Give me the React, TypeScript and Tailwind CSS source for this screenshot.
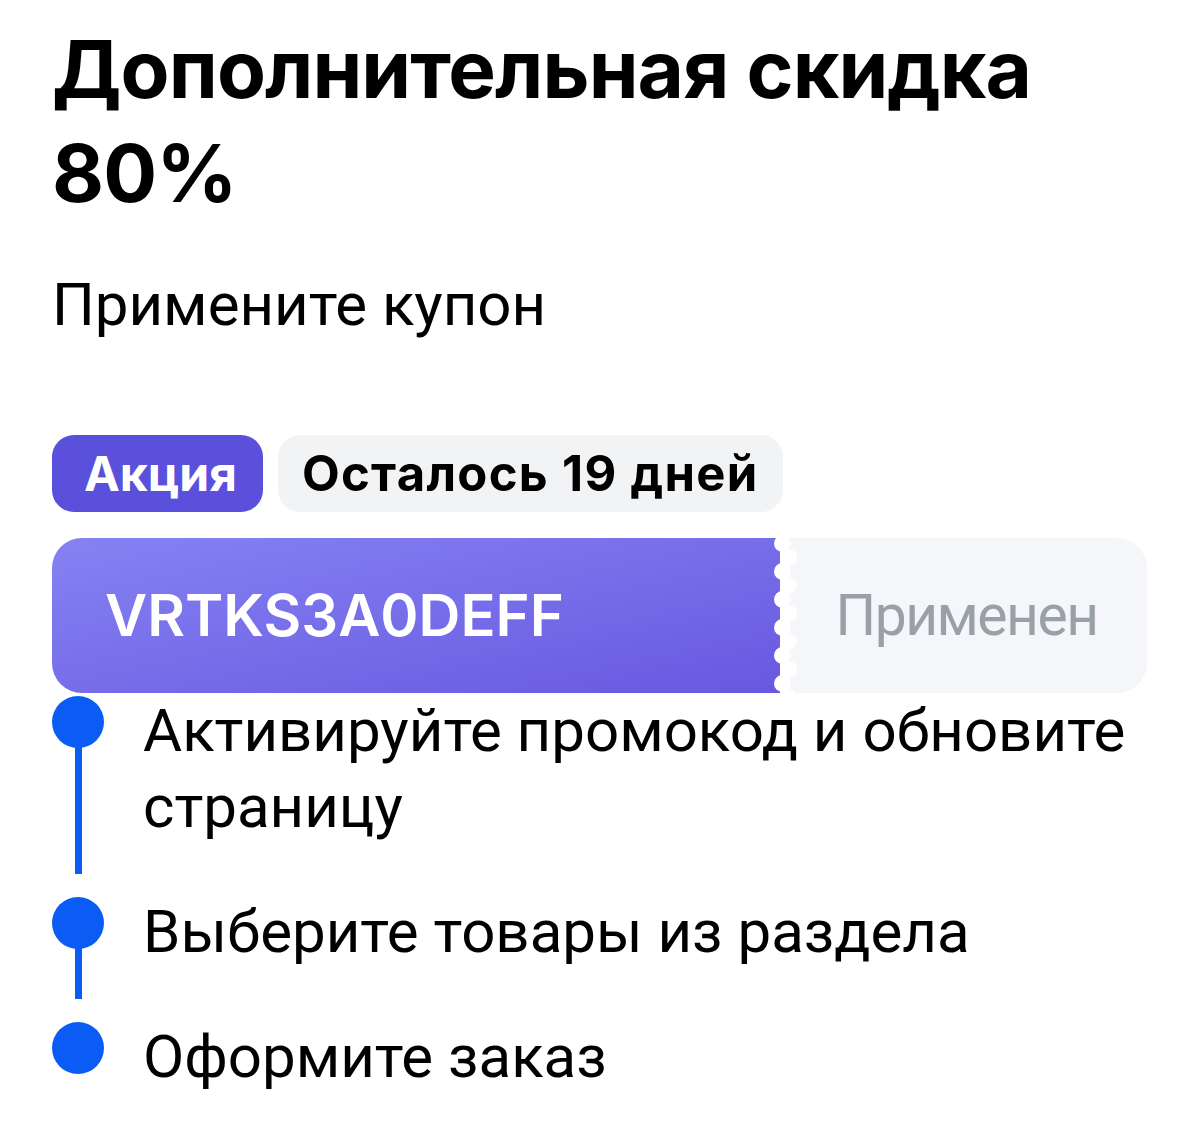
import React from "react";

const steps = [
  "Активируйте промокод и обновите страницу",
  "Выберите товары из раздела",
  "Оформите заказ",
];

function Scallops() {
  const a = [0, 1, 2, 3, 4, 5];
  return (
    <div className="pointer-events-none absolute top-0 bottom-0 left-[722px] w-[20px]">
      {a.map((i) => (
        <div
          key={"a" + i}
          className="absolute h-[17px] w-[17px] rounded-full bg-white"
          style={{ left: 0, top: i * 28 - 3 }}
        />
      ))}
      {a.map((i) => (
        <div
          key={"b" + i}
          className="absolute h-[17px] w-[17px] rounded-full bg-white"
          style={{ left: 6, top: i * 28 + 11 }}
        />
      ))}
    </div>
  );
}

export default function App() {
  return (
    <div className="min-h-[1144px] w-[1199px] bg-white px-[52px] pt-[17px] text-black">
      <h1 className="font-['Inter',sans-serif] text-[80px] font-bold leading-[104px] tracking-[-0.9px]">
        Дополнительная скидка
        <br />
        80%
      </h1>
      <p className="mt-[45px] font-['Roboto',sans-serif] text-[60px] leading-[70px]">
        Примените купон
      </p>

      <div className="mt-[95px] flex gap-[15px]">
        <div className="flex h-[77px] items-center rounded-[22px] bg-[#5a50dc] pl-[32px] pr-[26px] font-['Inter',sans-serif] text-[48px] font-bold tracking-[0px] text-white">
          Акция
        </div>
        <div className="flex h-[77px] items-center rounded-[22px] bg-[#f2f3f5] px-[24px] font-['Inter',sans-serif] text-[49px] font-bold tracking-[1.3px]">
          Осталось 19 дней
        </div>
      </div>

      <div className="relative mt-[26px] flex h-[155px]">
        <div className="flex w-[728px] items-center rounded-l-[30px] bg-gradient-to-br from-[#8682f3] to-[#6858e0] pl-[53px] font-['Inter',sans-serif] text-[58px] font-semibold text-white">
          VRTKS3A0DEFF
        </div>
        <div className="ml-[6px] flex flex-1 items-center justify-center rounded-r-[30px] bg-[#f4f6f9] font-['Roboto',sans-serif] text-[57px] tracking-[-1.5px] text-[#99a0a6]">
          Применен
        </div>
        <Scallops />
      </div>

      <div className="flex flex-col">
        {steps.map((s, i) => (
          <div key={i} className={"relative flex gap-[39px] " + (i < steps.length - 1 ? "pb-[49px]" : "")}>
            <div className="relative w-[52px] shrink-0">
              <div className="mt-[3px] h-[52px] w-[52px] rounded-full bg-[#0a5cf5]" />
              {i < steps.length - 1 && (
                <div className="absolute left-[23px] top-[29px] bottom-[-29px] w-[7px] bg-[#0a5cf5]" />
              )}
            </div>
            <div className="font-['Roboto',sans-serif] text-[60px] leading-[76px]">{s}</div>
          </div>
        ))}
      </div>
    </div>
  );
}
